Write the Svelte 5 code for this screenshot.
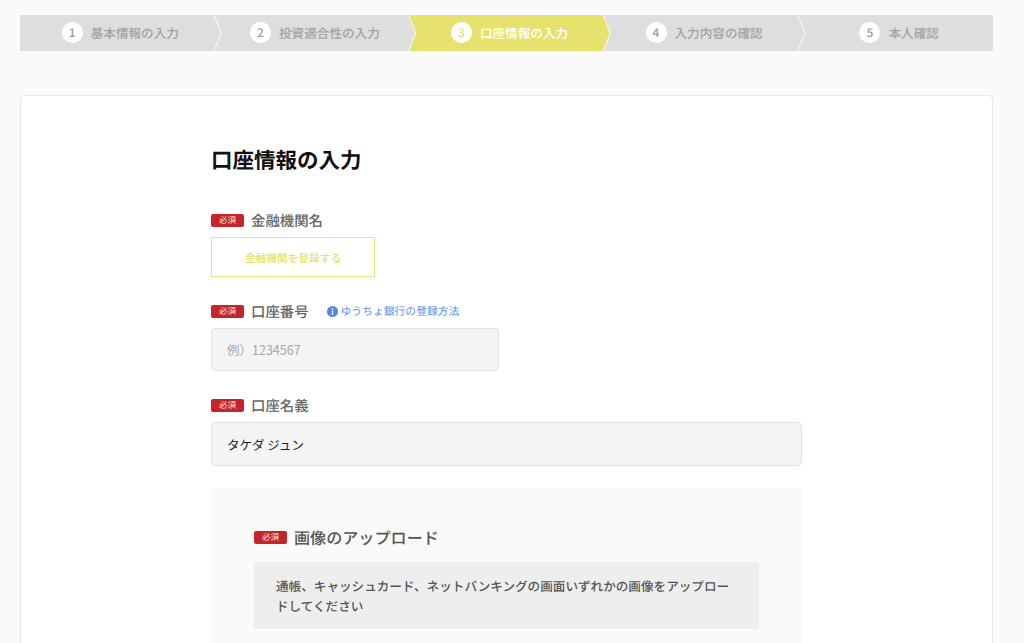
<script>
    const steps = [
        { no: 1, label: "基本情報の入力" },
        { no: 2, label: "投資適合性の入力" },
        { no: 3, label: "口座情報の入力", active: true },
        { no: 4, label: "入力内容の確認" },
        { no: 5, label: "本人確認" }
    ];
</script>

<div class="page">
    <ol class="stepper">
        {#each steps as step}
            <li class="step" class:active={step.active}>
                <span class="num">{step.no}</span>
                <span>{step.label}</span>
            </li>
        {/each}
    </ol>

    <main class="card">
        <div class="content">
            <h1>口座情報の入力</h1>

            <div class="label first">
                <span class="badge">必須</span>
                <span>金融機関名</span>
            </div>
            <button class="bank">金融機関を登録する</button>

            <div class="label">
                <span class="badge">必須</span>
                <span>口座番号</span>
                <a class="help" href="#help">
                    <svg width="11" height="11" viewBox="0 0 11 11">
                        <circle cx="5.5" cy="5.5" r="5.5" fill="#4f86e8" />
                        <rect x="4.8" y="2" width="1.4" height="1.4" fill="#fff" />
                        <rect x="4.8" y="4.4" width="1.4" height="4.4" fill="#fff" />
                    </svg>
                    ゆうちょ銀行の登録方法
                </a>
            </div>
            <input class="field short" placeholder="例）1234567" />

            <div class="label">
                <span class="badge">必須</span>
                <span>口座名義</span>
            </div>
            <input class="field" value="タケダ ジュン" />

            <section class="upload">
                <div class="upload-title">
                    <span class="badge">必須</span>
                    <span>画像のアップロード</span>
                </div>
                <p class="note">通帳、キャッシュカード、ネットバンキングの画面いずれかの画像をアップロードしてください</p>
            </section>
        </div>
    </main>
</div>

<style>
    :global(html), :global(body) {
        margin: 0;
        height: 643px;
        overflow: hidden;
        background: #fafafa;
    }

    .page {
        height: 643px;
        overflow: hidden;
        padding: 15px 31px 0 20px;
        font-family: "Noto Sans CJK JP", "Noto Sans", sans-serif;
        color: #555;
        text-rendering: geometricPrecision;
    }

    .stepper {
        display: flex;
        margin: 0;
        padding: 0;
        list-style: none;
    }

    .step {
        flex: 0 0 calc(20% + 6px);
        margin-right: -6px;
        height: 36px;
        box-sizing: border-box;
        padding-bottom: 1px;
        display: flex;
        align-items: center;
        justify-content: center;
        gap: 8px;
        background: #dedede;
        color: #a3a3a3;
        font-size: 12.6px;
        font-weight: 500;
        clip-path: polygon(0 0, calc(100% - 7px) 0, 100% 50%, calc(100% - 7px) 100%, 0 100%, 7px 50%);
    }

    .step:first-child {
        clip-path: polygon(0 0, calc(100% - 7px) 0, 100% 50%, calc(100% - 7px) 100%, 0 100%);
    }

    .step:last-child {
        flex: 0 0 20%;
        margin-right: 0;
        padding-left: 7px;
        clip-path: polygon(0 0, 100% 0, 100% 100%, 0 100%, 7px 50%);
    }

    .step.active {
        background: #e6e26d;
        color: #fff;
    }

    .num {
        width: 21px;
        height: 21px;
        border-radius: 50%;
        background: #fff;
        color: #9c9c9c;
        display: flex;
        align-items: center;
        justify-content: center;
        font-size: 12px;
    }

    .active .num {
        color: #e6e26d;
    }

    .card {
        margin-top: 44px;
        height: 700px;
        box-sizing: border-box;
        background: #fff;
        border: 1px solid #e8e8e8;
        border-radius: 4px;
        padding: 48px 190px 0;
    }

    .content {
        width: 591px;
    }

    h1 {
        margin: 0;
        font-size: 21.5px;
        line-height: 32px;
        font-weight: 700;
        color: #111;
    }

    .label {
        display: flex;
        align-items: center;
        height: 24px;
        margin: 22px 0 5px;
        font-size: 14.4px;
        font-weight: 500;
        color: #666;
    }

    .label.first {
        margin-top: 32px;
    }

    .badge {
        width: 33px;
        height: 13px;
        margin-right: 7px;
        border-radius: 2px;
        background: #c52528;
        color: #f8e4e4;
        display: flex;
        align-items: center;
        justify-content: center;
        font-size: 8.5px;
        font-weight: 400;
    }

    .bank {
        display: block;
        width: 164px;
        height: 40px;
        padding: 0;
        background: #fff;
        border: 1px solid #e9e67f;
        color: #e6e26d;
        font-family: inherit;
        font-size: 10.7px;
        font-weight: 500;
    }

    .help {
        display: flex;
        align-items: center;
        gap: 3px;
        margin-left: 18px;
        color: #5b8fe8;
        font-size: 10.8px;
        font-weight: 400;
        text-decoration: none;
    }

    .field {
        display: block;
        width: 100%;
        height: 44px;
        box-sizing: border-box;
        padding: 0 15px;
        background: #f4f4f4;
        border: 1px solid #e2e2e2;
        border-radius: 4px;
        font-family: inherit;
        font-size: 12.5px;
        color: #222;
    }

    .field.short {
        width: 288px;
        height: 43px;
    }

    .field::placeholder {
        color: #a8a8a8;
    }

    .upload {
        margin-top: 22px;
        padding: 37px 43px 40px;
        background: #fafafa;
    }

    .upload-title {
        display: flex;
        align-items: center;
        height: 24px;
        font-size: 16.1px;
        font-weight: 500;
        color: #555;
    }

    .note {
        margin: 13px 0 0;
        padding: 13.5px 22px;
        background: #eee;
        font-size: 12.6px;
        line-height: 20px;
        font-weight: 500;
        color: #555;
    }
</style>
